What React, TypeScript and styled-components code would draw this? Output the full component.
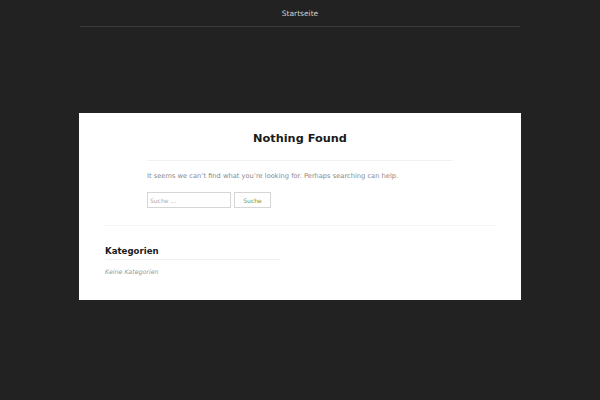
import styled, { createGlobalStyle } from 'styled-components'

const GlobalStyle = createGlobalStyle`
  html, body {
    margin: 0;
    padding: 0;
    background: #222222;
    font-family: "DejaVu Sans", Verdana, sans-serif;
  }
`

const Page = styled.div`
  width: 600px;
  min-height: 400px;
  display: flex;
  flex-direction: column;
  align-items: center;
`

const Header = styled.nav`
  width: 440px;
  height: 26px;
  display: flex;
  justify-content: center;
  align-items: center;
  border-bottom: 1px solid #3c3c3c;
`

const NavLink = styled.a`
  color: #cfcfcf;
  font-size: 7.5px;
  text-decoration: none;
`

const Card = styled.main`
  margin-top: 86px;
  width: 442px;
  background: #ffffff;
  box-sizing: border-box;
  padding: 0 26px 25px;
`

const Article = styled.section`
  width: 306px;
  margin: 0 auto;
  padding-top: 19px;
  padding-bottom: 17px;
`

const Title = styled.h1`
  margin: 0;
  font-size: 11.3px;
  font-weight: bold;
  color: #1a1a1a;
  text-align: center;
  padding-bottom: 15px;
  border-bottom: 1px solid #f1f1f1;
`

const Text = styled.p`
  margin: 11px 0 12px;
  font-size: 6.7px;
  color: #8a8a8a;
`

const SearchForm = styled.form`
  display: flex;
  gap: 3px;
`

const SearchInput = styled.input`
  width: 84px;
  height: 16px;
  box-sizing: border-box;
  border: 1px solid #d6d6d6;
  padding: 0 2px;
  font-family: inherit;
  font-size: 6px;
  color: #888;
  &::placeholder {
    color: #aaaaaa;
  }
`

const SearchButton = styled.button`
  width: 37px;
  height: 16px;
  box-sizing: border-box;
  border: 1px solid #d6d6d6;
  background: #ffffff;
  padding: 0;
  font-family: inherit;
  font-size: 6px;
  color: #6a9a3a;
`

const Divider = styled.hr`
  margin: 0;
  border: none;
  border-top: 1px solid #f3f3f3;
`

const Widget = styled.aside`
  width: 175px;
  padding-top: 20px;
`

const WidgetTitle = styled.h2`
  margin: 0;
  font-size: 8.6px;
  font-weight: bold;
  color: #1a1a1a;
  padding-bottom: 3px;
  border-bottom: 1px solid #f1f1f1;
`

const Empty = styled.p`
  margin: 8px 0 0;
  font-size: 6.3px;
  font-style: italic;
  color: #9a9a9a;
`

export default function App() {
  return (
    <>
      <GlobalStyle />
      <Page>
        <Header>
          <NavLink href="#">Startseite</NavLink>
        </Header>
        <Card>
          <Article>
            <Title>Nothing Found</Title>
            <Text>It seems we can’t find what you’re looking for. Perhaps searching can help.</Text>
            <SearchForm onSubmit={(e) => e.preventDefault()}>
              <SearchInput type="search" placeholder="Suche …" />
              <SearchButton type="submit">Suche</SearchButton>
            </SearchForm>
          </Article>
          <Divider />
          <Widget>
            <WidgetTitle>Kategorien</WidgetTitle>
            <Empty>Keine Kategorien</Empty>
          </Widget>
        </Card>
      </Page>
    </>
  )
}
